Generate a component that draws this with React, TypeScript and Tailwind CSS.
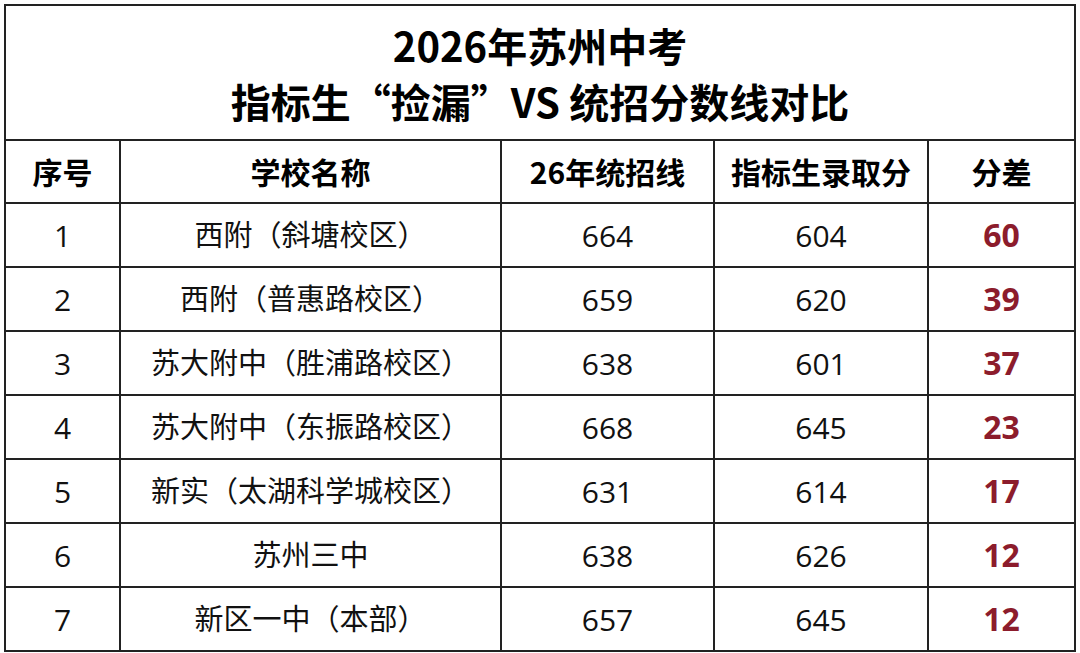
const rows = [
  { id: 1, name: "西附（斜塘校区）", tz: 664, zb: 604, diff: 60 },
  { id: 2, name: "西附（普惠路校区）", tz: 659, zb: 620, diff: 39 },
  { id: 3, name: "苏大附中（胜浦路校区）", tz: 638, zb: 601, diff: 37 },
  { id: 4, name: "苏大附中（东振路校区）", tz: 668, zb: 645, diff: 23 },
  { id: 5, name: "新实（太湖科学城校区）", tz: 631, zb: 614, diff: 17 },
  { id: 6, name: "苏州三中", tz: 638, zb: 626, diff: 12 },
  { id: 7, name: "新区一中（本部）", tz: 657, zb: 645, diff: 12 },
];

const headers = ["序号", "学校名称", "26年统招线", "指标生录取分", "分差"];

export default function App() {
  return (
    <div className="w-[1080px] h-[653px] bg-white pl-[4px] pt-[4px] font-['Open_Sans','Noto_Sans_CJK_SC',sans-serif] text-[#111]">
      <table className="w-[1070px] border-collapse border-2 border-[#222] table-fixed">
        <colgroup>
          <col className="w-[115px]" />
          <col className="w-[381px]" />
          <col className="w-[213px]" />
          <col className="w-[214px]" />
          <col className="w-[147px]" />
        </colgroup>
        <thead>
          <tr>
            <th
              colSpan={5}
              className="h-[135px] border-2 border-[#222] text-center text-[40px] font-bold leading-[56px] text-black font-['Noto_Sans_CJK_SC',sans-serif]"
            >
              <div>2026年苏州中考</div>
              <div>指标生“捡漏”VS 统招分数线对比</div>
            </th>
          </tr>
          <tr>
            {headers.map((h) => (
              <th
                key={h}
                className="h-[63px] border-2 border-[#222] text-center text-[30px] font-bold text-black font-['Noto_Sans_CJK_SC',sans-serif]"
              >
                {h}
              </th>
            ))}
          </tr>
        </thead>
        <tbody>
          {rows.map((r) => (
            <tr key={r.id} className="h-[64px] text-[30px]">
              <td className="border-2 border-[#222] text-center">{r.id}</td>
              <td className="border-2 border-[#222] text-center text-[29px]">{r.name}</td>
              <td className="border-2 border-[#222] text-center">{r.tz}</td>
              <td className="border-2 border-[#222] text-center">{r.zb}</td>
              <td className="border-2 border-[#222] text-center text-[32px] font-bold text-[#8c1c2c]">
                {r.diff}
              </td>
            </tr>
          ))}
        </tbody>
      </table>
    </div>
  );
}
